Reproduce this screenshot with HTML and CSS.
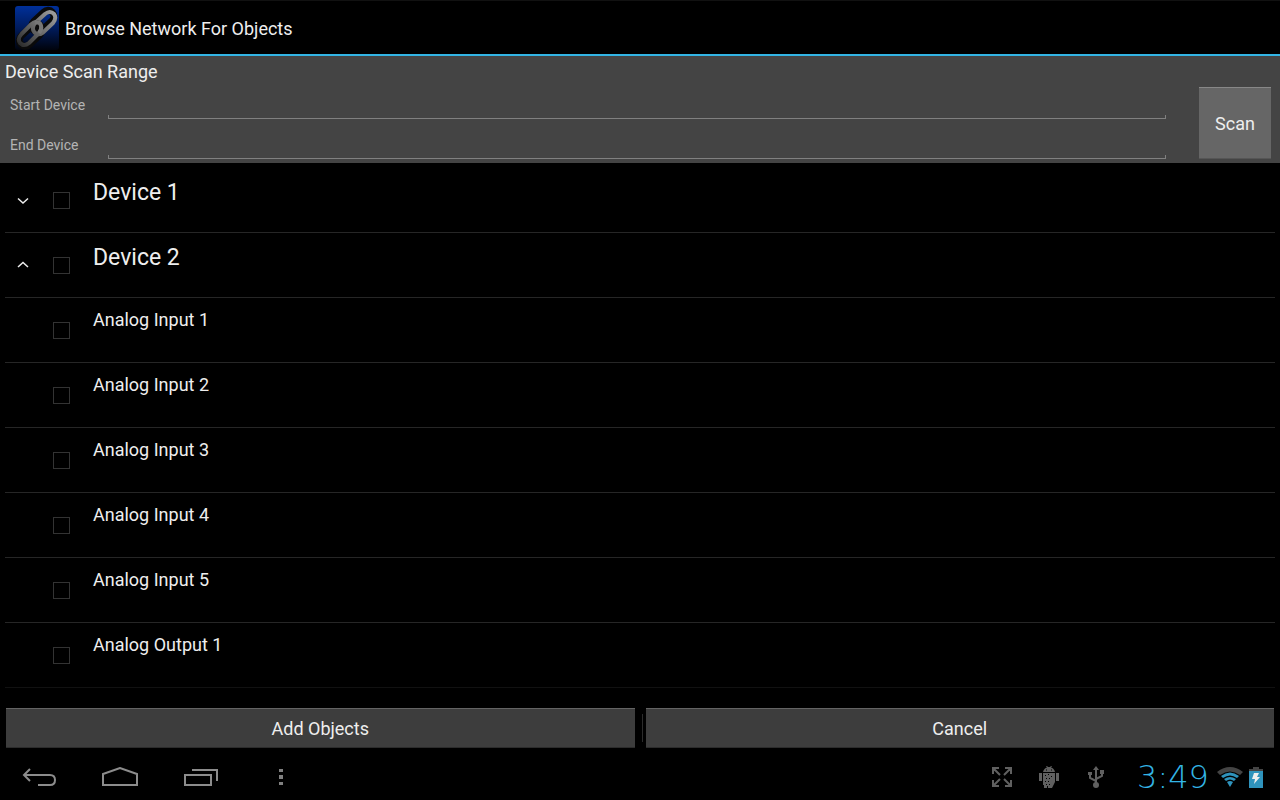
FILE: index.html
```html
<!DOCTYPE html>
<html lang="en">
<head>
<meta charset="utf-8">
<meta name="viewport" content="width=device-width, initial-scale=1">
<title>Browse Network For Objects</title>
<link rel="stylesheet" href="styles.css">
</head>
<body>
<header class="titlebar">
  <svg class="logo" viewBox="0 0 44 44" aria-hidden="true">
    <defs>
      <linearGradient id="sky" x1="0" y1="0" x2="0" y2="1"><stop offset="0" stop-color="#00309a"/><stop offset=".5" stop-color="#001b5c"/><stop offset="1" stop-color="#00030c"/></linearGradient>
      <linearGradient id="steel" gradientUnits="userSpaceOnUse" x1="40" y1="4" x2="4" y2="40"><stop offset="0" stop-color="#a0a0a0"/><stop offset=".5" stop-color="#6c6c6c"/><stop offset="1" stop-color="#2a2a2a"/></linearGradient>
    </defs>
    <rect width="44" height="44" rx="3" fill="url(#sky)"/>
    <g fill="none" stroke-linejoin="round">
      <g stroke="#0a0a0a" stroke-width="7">
        <rect x="-1" y="17" width="26" height="12" rx="6" transform="rotate(-43 22 22)"/>
        <rect x="18" y="15" width="26" height="12" rx="6" transform="rotate(-43 22 22)"/>
      </g>
      <g stroke="url(#steel)" stroke-width="4">
        <path d="M6.500 28L16 18.500Q21 14 25 18Q28 22 24 27L14 37Q9 41 5 37Q2 33 6.500 28Z"/>
        <path d="M20 17L30 8Q35 4 39 8Q42 12 38 17L28 26.500Q23 30 19.500 26.500Q16 22 20 17Z"/>
      </g>
      <path d="M22 17.500Q26 17 26.500 21.500" stroke="#0a0a0a" stroke-width="6"/>
      <path d="M20 16.500Q25 15.500 26 19.500T24 27" stroke="#777" stroke-width="4"/>
    </g>
  </svg>
  <h1 class="title">Browse Network For Objects</h1>
</header>

<form class="scan">
  <h2 class="scan-title">Device Scan Range</h2>
  <div class="scan-body">
    <div class="fields">
      <label class="field-label" for="start">Start Device</label>
      <input class="field-input" id="start" type="text">
      <label class="field-label" for="end">End Device</label>
      <input class="field-input" id="end" type="text">
    </div>
    <button class="button scan-button" type="button">Scan</button>
  </div>
</form>

<main class="content">
  <ul class="list">
    <li class="row row-device">
      <button class="toggle" type="button" aria-label="Expand Device 1" aria-expanded="false"><svg class="chevron" viewBox="0 0 12 8"><path d="M1 2.500L6 7L11 2.500"/></svg></button>
      <input class="check" type="checkbox" id="d1"><label class="name" for="d1">Device 1</label>
    </li>
    <li class="row row-device">
      <button class="toggle" type="button" aria-label="Collapse Device 2" aria-expanded="true"><svg class="chevron" viewBox="0 0 12 8"><path d="M1 6L6 1.500L11 6"/></svg></button>
      <input class="check" type="checkbox" id="d2"><label class="name" for="d2">Device 2</label>
    </li>
    <li class="row"><input class="check" type="checkbox" id="a1"><label class="name" for="a1">Analog Input 1</label></li>
    <li class="row"><input class="check" type="checkbox" id="a2"><label class="name" for="a2">Analog Input 2</label></li>
    <li class="row"><input class="check" type="checkbox" id="a3"><label class="name" for="a3">Analog Input 3</label></li>
    <li class="row"><input class="check" type="checkbox" id="a4"><label class="name" for="a4">Analog Input 4</label></li>
    <li class="row"><input class="check" type="checkbox" id="a5"><label class="name" for="a5">Analog Input 5</label></li>
    <li class="row"><input class="check" type="checkbox" id="o1"><label class="name" for="o1">Analog Output 1</label></li>
  </ul>
</main>

<div class="actions">
  <button class="button action" type="button">Add Objects</button>
  <span class="divider"></span>
  <button class="button action" type="button">Cancel</button>
</div>

<footer class="system">
  <nav class="keys">
    <button class="key" type="button" aria-label="Back"><svg viewBox="0 0 36 20"><path d="M8 2L2 8L8 14M2 8H28Q33 8 33 13T28 18H16"/></svg></button>
    <button class="key" type="button" aria-label="Home"><svg viewBox="0 0 36 20"><path d="M1 18V7L18 1L35 7V18Z"/></svg></button>
    <button class="key" type="button" aria-label="Recent apps"><svg viewBox="0 0 36 20"><path d="M3 8H29V18H3ZM10 3H35V14"/></svg></button>
    <button class="key" type="button" aria-label="More options"><svg viewBox="0 0 36 20"><path class="solid" d="M17 2h4v3h-4zM17 8h4v4h-4zM17 15h4v3h-4z"/></svg></button>
  </nav>
  <div class="status">
    <svg class="notice" viewBox="0 0 20 22"><path d="M7 2H1V8M1 2L8 9M13 2H19V8M19 2L12 9M1 14V20H7M1 20L8 13M19 14V20H13M19 20L12 13"/></svg>
    <svg class="notice" viewBox="0 0 20 22"><path class="solid" d="M4 6Q5 2 8 1.500L7 0H8L9 1H11L12 0H13L12 1.500Q15 2 16 6ZM0 7H3V15H0ZM17 7H20V15H17ZM4 7H16V16L13 22H9V20H8V22H5V19H4Z"/><path class="holes" d="M7 3.500h1v1H7zM12 3.500h1v1h-1zM6 9h1v1H6zM9 8h1v1H9zM12 10h1v1h-1zM7 12h1v1H7zM10 12h1v1h-1zM6 15h1v1H6zM9 15h1v1H9zM7 18h1v1H7zM10 18h1v1h-1z"/></svg>
    <svg class="notice" viewBox="0 0 20 22"><path d="M10 3V18M10 15L4 12V8M10 13L16 10V6"/><path class="solid" d="M10 0L13 4H7ZM2 6h4v3H2zM14 4h4v4h-4z"/><circle class="solid" cx="10" cy="19" r="3"/></svg>
    <time class="clock">3:49</time>
    <svg class="wifi" viewBox="0 0 26 20"><path class="off" d="M0 5Q13 -5 26 5L23 8Q13 1 3 8Z"/><path class="on" d="M4 9Q13 2 22 9L20 11Q13 6 6 11ZM7 12Q13 8 19 12L17 14Q13 11 9 14ZM10 15Q13 13 16 15L13 20Z"/></svg>
    <svg class="battery" viewBox="0 0 14 21"><path class="off" d="M4 0h6v2h4v4H0V2h4z"/><path class="on" d="M0 4h14v17H0z"/><path class="bolt" d="M5 6H10L8 10H11L5 17L6 12H3Z"/></svg>
  </div>
</footer>
</body>
</html>
```

FILE: styles.css
```css
* { box-sizing: border-box; }

body {
  margin: 0;
  min-height: 100vh;
  display: flex;
  flex-direction: column;
  background: #000;
  color: #eee;
  font: 18px/24px Roboto, "Noto Sans", sans-serif;
}

button, input { font: inherit; color: inherit; margin: 0; }
button { border: 0; padding: 0; background: none; }

.titlebar {
  display: flex;
  align-items: center;
  gap: 6px;
  height: 56px;
  padding: 0 15px;
  border-top: 1px solid #111;
  border-bottom: 2px solid #33b5e5;
}
.logo { width: 44px; height: 44px; }
.title, .scan-title { margin: 0; font-size: 18px; font-weight: 400; }
.title { padding-top: 2px; }

.scan { padding: 4px 9px 4px 5px; background: #444; }
.scan-body { display: flex; align-items: flex-end; gap: 33px; }
.fields {
  flex: 1;
  display: grid;
  grid-template-columns: 98px 1fr;
  grid-auto-rows: 40px;
  padding-left: 5px;
  margin-top: -5px;
}
.field-label {
  padding-top: 16px;
  font-size: 14px;
  line-height: 20px;
  color: #b4b4b4;
}
.field-input {
  align-self: end;
  width: 100%;
  height: 32px;
  padding: 0 8px;
  border: 0;
  outline: 0;
  background:
    linear-gradient(#808080, #808080) left bottom / 100% 1px no-repeat,
    linear-gradient(#808080, #808080) left bottom / 1px 4px no-repeat,
    linear-gradient(#808080, #808080) right bottom / 1px 4px no-repeat;
}

.button {
  padding-top: 2px;
  background: #3d3d3d;
  border-top: 1px solid #646464;
  border-bottom: 1px solid #2c2c2c;
}
.scan-button {
  width: 72px;
  height: 72px;
  background: #666;
  border-top-color: #888;
  border-bottom-color: #555;
}

.content { flex: 1; padding: 5px 5px 0 5px; }
.list { margin: 0; padding: 0; list-style: none; }
.row {
  display: grid;
  grid-template-columns: 36px 28px 1fr;
  align-items: center;
  column-gap: 12px;
  height: 65px;
  border-bottom: 1px solid #262626;
}
.row:last-child { border-bottom-color: #111; }
.toggle { height: 40px; display: grid; place-items: center; }
.chevron {
  width: 12px;
  height: 8px;
  fill: none;
  stroke: #eee;
  stroke-width: 1.5;
}
.check {
  grid-column: 2;
  appearance: none;
  width: 17px;
  height: 17px;
  border: 1px solid #333;
}
.check:checked { background: #33b5e5; }
.name { grid-column: 3; align-self: start; padding-top: 10px; }
.row-device .name { font-size: 23px; line-height: 30px; }

.actions { display: flex; align-items: center; padding: 0 6px 4px; }
.action { flex: 1; height: 40px; }
.divider {
  width: 1px;
  height: 28px;
  margin: 0 3px 0 7px;
  background: #2c2c2c;
}

.system {
  display: flex;
  align-items: center;
  justify-content: space-between;
  height: 48px;
  padding: 2px 17px 0 22px;
}
.keys { display: flex; gap: 44px; }
.key { display: flex; }
.key svg {
  width: 36px;
  height: 20px;
  fill: none;
  stroke: #8c8c8c;
  stroke-width: 2;
}
.system .solid { fill: #808080; stroke: none; }
.status { display: flex; align-items: center; }
.notice {
  width: 20px;
  height: 22px;
  margin-right: 27px;
  fill: none;
  stroke: #606060;
  stroke-width: 2;
}
.status .notice .solid { fill: #606060; }
.holes { fill: #000; stroke: none; }
.clock {
  width: 80px;
  margin-right: 4px;
  font: 200 32px/28px "DejaVu Sans Light", "DejaVu Sans ExtraLight", "DejaVu Sans", sans-serif;
  text-align: center;
  color: #33b5e5;
}
.wifi { width: 26px; height: 20px; margin-right: 6px; }
.battery { width: 14px; height: 21px; }
.off { fill: #444; }
.on { fill: #2f93bc; }
.bolt { fill: #eee; }
```
